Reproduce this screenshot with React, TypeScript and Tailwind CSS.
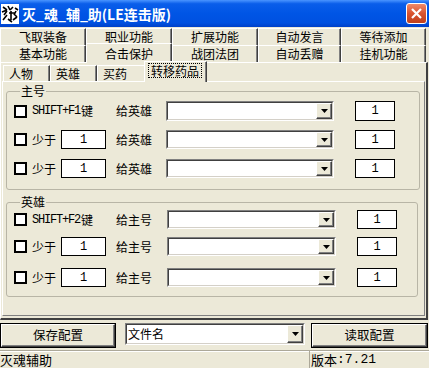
import React from 'react';

const face = 'bg-[#ECE9D8]';
const mono = "font-['Liberation_Mono','Noto_Sans_CJK_SC',monospace]";

function DropArrow() {
  return (
    <div className="w-[16px] h-full bg-[#ECE9D8] border border-t-white border-l-white border-b-[#404040] border-r-[#404040] shadow-[inset_-1px_-1px_0_#808080] flex items-center justify-center">
      <svg width="7" height="4" viewBox="0 0 7 4">
        <path d="M0 0h7L3.5 4z" fill="#000" />
      </svg>
    </div>
  );
}

function Combo({ width, height = 20, text }: { width: number; height?: number; text?: React.ReactNode }) {
  return (
    <div
      className="border border-t-[#808080] border-l-[#808080] border-b-white border-r-white"
      style={{ width, height }}
    >
      <div className="h-full bg-white border border-t-[#404040] border-l-[#404040] border-b-[#D4D0C8] border-r-[#D4D0C8] flex items-stretch">
        <div className="flex-1 pl-[1px] flex items-center leading-none">{text}</div>
        <DropArrow />
      </div>
    </div>
  );
}

function NumBox({ width, height = 19 }: { width: number; height?: number }) {
  return (
    <div
      className={`border border-black bg-white flex items-center justify-center ${mono} leading-none`}
      style={{ width, height }}
    >
      1
    </div>
  );
}

function Check() {
  return <div className="w-[13px] h-[13px] border-2 border-black bg-white shrink-0" />;
}

type RowProps = {
  kind: 'key' | 'less';
  keyText?: string;
  target: string;
  height: number;
  inputW: number;
  comboStart: number;
  comboW: number;
  numGap: number;
  className?: string;
};

function Row({ kind, keyText, target, height, inputW, comboStart, comboW, numGap, className }: RowProps) {
  return (
    <div className={`flex items-center ${className ?? ''}`} style={{ height }}>
      <div className="w-[102px] flex items-center">
        <Check />
        {kind === 'key' ? (
          <span className="ml-[5px] flex items-center">
            <span className={`${mono} text-[12px] tracking-[-1.2px]`}>{keyText}</span>
            <span className="ml-[1px]">键</span>
          </span>
        ) : (
          <>
            <span className="ml-[5px] w-[29px]">少于</span>
            <NumBox width={inputW} height={height} />
          </>
        )}
      </div>
      <div style={{ width: comboStart }}>{target}</div>
      <Combo width={comboW} height={height} />
      <div style={{ width: numGap }} />
      <NumBox width={40} height={height} />
    </div>
  );
}

function TopTab({ label, width, selected }: { label: string; width: number; selected?: boolean }) {
  return (
    <div
      className={`flex justify-center border-t border-l border-white border-r border-r-[#404040] shadow-[inset_-1px_0_0_#808080] ${face} ${
        selected ? 'h-[20px] relative z-10 -mb-px items-start pt-[1px]' : 'h-[17px] items-center'
      }`}
      style={{ width }}
    >
      {label}
    </div>
  );
}

function SubTab({ label, width, selected }: { label: string; width: number; selected?: boolean }) {
  return (
    <div
      className={`flex border-t border-l border-white border-r border-r-[#404040] shadow-[inset_-1px_0_0_#808080] ${face} ${
        selected ? 'h-[21px] relative z-10 -mb-px pt-[1px] pl-[3px] -ml-[2px]' : 'h-[16px] items-center pl-[5px]'
      }`}
      style={{ width }}
    >
      {selected ? (
        <span className="border border-dotted border-black px-[2px] h-[15px] leading-[13px]">{label}</span>
      ) : (
        label
      )}
    </div>
  );
}

function Button({ label, width, height }: { label: string; width: number; height: number }) {
  return (
    <div className="border border-black" style={{ width, height }}>
      <div className="h-full bg-[#ECE9D8] border border-t-white border-l-white border-b-[#404040] border-r-[#404040] shadow-[inset_-1px_-1px_0_#808080] flex items-center justify-center text-[12.5px]">
        {label}
      </div>
    </div>
  );
}

function TitleIcon() {
  return (
    <svg width="18" height="20" viewBox="0 0 18 20" className="ml-[1px]">
      <rect width="18" height="20" fill="#fff" />
      <path d="M2 3l4 3M1 8l5-2M3 11l3-4M2 16l4-5M7 2l2 4M9 6l3-3M8 9h6M10 7v9M13 10l3 3M7 15l4 3M12 16l4-3M14 4l3 2M15 7l-2 4" stroke="#000" strokeWidth="1.6" />
    </svg>
  );
}

export default function App() {
  const top1 = ['飞取装备', '职业功能', '扩展功能', '自动发言', '等待添加'];
  const top2 = ['基本功能', '合击保护', '战团法团', '自动丢赠', '挂机功能'];
  const widths = [86, 86, 86, 83, 85];

  return (
    <div className={`w-[429px] h-[368px] ${face} flex flex-col overflow-hidden text-[12px] text-black font-['Noto_Sans_CJK_SC',sans-serif]`}>
      {/* title bar */}
      <div className="h-[27px] shrink-0 flex items-center bg-[linear-gradient(to_bottom,#4A95FF_0%,#0A5EEA_14%,#0055E5_50%,#0050E0_85%,#0040C8_100%)]">
        <TitleIcon />
        <span className="ml-[3px] text-white font-bold text-[14px] leading-none">灭_魂_辅_助(LE连击版)</span>
        <div className="ml-auto mr-[2px] w-[21px] h-[21px] rounded-[3px] border border-white bg-[linear-gradient(to_bottom,#F08A6A,#D9532F_50%,#C0401C)] flex items-center justify-center">
          <svg width="11" height="11" viewBox="0 0 11 11">
            <path d="M1 1l9 9M10 1l-9 9" stroke="#fff" strokeWidth="2.2" />
          </svg>
        </div>
      </div>

      {/* top tab rows */}
      <div className="flex mt-[1px] h-[17px]">
        {top1.map((t, i) => (
          <TopTab key={t} label={t} width={widths[i]} />
        ))}
      </div>
      <div className="flex h-[17px] items-end">
        {top2.map((t, i) => (
          <TopTab key={t} label={t} width={widths[i]} selected={i === 1} />
        ))}
      </div>

      {/* outer panel */}
      <div className="h-[258px] w-[428px] shrink-0 border-t border-l border-white border-r-2 border-r-[#404040] border-b-2 border-b-[#404040] flex flex-col pl-[1px]">
        <div className="flex h-[18px] items-end pl-[1px]">
          <SubTab label="人物" width={47} />
          <SubTab label="英雄" width={47} />
          <SubTab label="买药" width={49} />
          <SubTab label="转移药品" width={63} selected />
        </div>
        <div className="h-[235px] w-[423px] border-t border-l border-white border-r border-r-[#808080] border-b border-b-[#808080] flex flex-col">
          <fieldset className="mt-[2px] ml-[3px] w-[414px] border border-[#B8B5A6] rounded-[3px] pb-[11px] pl-[7px]">
            <legend className="ml-[6px] px-[1px] leading-[14px]">主号</legend>
            <Row kind="key" keyText="SHIFT+F1" target="给英雄" height={20} inputW={45} comboStart={50} comboW={168} numGap={21} className="mt-[3px]" />
            <Row kind="less" target="给英雄" height={19} inputW={45} comboStart={50} comboW={168} numGap={21} className="mt-[9px]" />
            <Row kind="less" target="给英雄" height={19} inputW={45} comboStart={50} comboW={168} numGap={21} className="mt-[10px]" />
          </fieldset>
          <fieldset className="mt-[5px] ml-[3px] w-[412px] border border-[#B8B5A6] rounded-[3px] pb-[9px] pl-[7px]">
            <legend className="ml-[6px] px-[1px] leading-[14px]">英雄</legend>
            <Row kind="key" keyText="SHIFT+F2" target="给主号" height={19} inputW={45} comboStart={51} comboW={169} numGap={21} className="mt-[1px]" />
            <Row kind="less" target="给主号" height={19} inputW={45} comboStart={51} comboW={169} numGap={21} className="mt-[8px]" />
            <Row kind="less" target="给主号" height={19} inputW={45} comboStart={51} comboW={169} numGap={21} className="mt-[12px]" />
          </fieldset>
        </div>
      </div>

      {/* bottom buttons */}
      <div className="mt-[3px] h-[25px] flex items-start shrink-0">
        <Button label="保存配置" width={116} height={25} />
        <div className="ml-[9px]">
          <Combo width={180} height={22} text={<span className="text-[12px] leading-none">文件名</span>} />
        </div>
        <div className="ml-[6px]">
          <Button label="读取配置" width={117} height={25} />
        </div>
      </div>

      {/* status bar */}
      <div className="mt-[2px] h-[18px] shrink-0 border-t border-t-[#ACA899] shadow-[inset_0_1px_0_#fff] flex items-center text-[13px]">
        <div className="w-[309px] h-full flex items-center leading-[14px]">灭魂辅助</div>
        <div className="flex-1 h-full flex items-center border-l border-l-[#ACA899] pl-[1px] leading-[14px]">
          版本<span className={mono}>:7.21</span>
        </div>
      </div>
    </div>
  );
}
